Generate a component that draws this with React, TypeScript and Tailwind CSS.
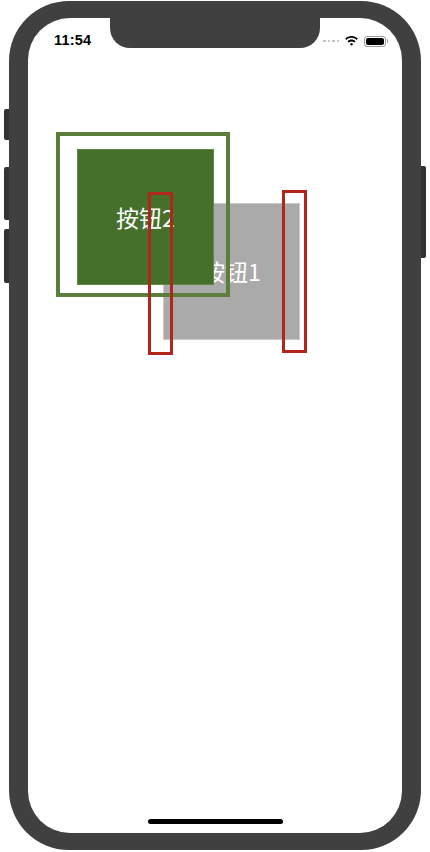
import React from 'react';

function Wifi() {
  return (
    <svg width="13" height="11" viewBox="0 0 13 11" fill="#000">
      <path d="M6.5 0C4 0 1.8 1 0.2 2.6l1.2 1.3C2.7 2.6 4.5 1.8 6.5 1.8s3.8 0.8 5.1 2.1l1.2-1.3C11.2 1 9 0 6.5 0z" />
      <path d="M6.5 3.6c-1.6 0-3 0.6-4 1.6l1.2 1.3c0.7-0.7 1.7-1.1 2.8-1.1s2.1 0.4 2.8 1.1l1.2-1.3c-1-1-2.4-1.6-4-1.6z" />
      <path d="M6.5 7.2c-0.7 0-1.3 0.3-1.7 0.7L6.5 9.8l1.7-1.9C7.8 7.5 7.2 7.2 6.5 7.2z" />
    </svg>
  );
}

function Battery() {
  return (
    <div className="flex items-center">
      <div className="w-[22px] h-[11px] rounded-[3px] border border-[#9a9a9a] p-[1px]">
        <div className="w-full h-full rounded-[2px] bg-black" />
      </div>
      <div className="w-[1.5px] h-[4px] rounded-r-sm bg-[#9a9a9a] ml-[0.5px]" />
    </div>
  );
}

export default function App() {
  return (
    <div className="relative w-[430px] h-[852px] bg-white overflow-hidden">
      {/* side buttons */}
      <div className="absolute left-[4px] top-[109px] w-[6px] h-[31px] rounded-l-[2px] bg-[#333333]" />
      <div className="absolute left-[4px] top-[167px] w-[6px] h-[53px] rounded-l-[2px] bg-[#333333]" />
      <div className="absolute left-[4px] top-[229px] w-[6px] h-[54px] rounded-l-[2px] bg-[#333333]" />
      <div className="absolute left-[420px] top-[166px] w-[6px] h-[92px] rounded-r-[2px] bg-[#333333]" />

      {/* phone frame */}
      <div className="relative ml-[9px] mt-[1px] w-[412px] h-[849px] rounded-[60px] bg-[#404040] pt-[17px] pb-[17px] pl-[19px] pr-[19px]">
        <div className="relative w-full h-full rounded-[42px] bg-white overflow-hidden flex flex-col">
          {/* notch */}
          <div className="absolute left-[82px] top-0 w-[210px] h-[30px] rounded-b-[20px] bg-[#404040]" />

          {/* status bar */}
          <div className="flex items-center justify-between h-[46px] pl-[26px] pr-[14px] font-['Liberation_Sans',sans-serif]">
            <span className="text-[14.5px] font-bold text-black tracking-[0.2px]">11:54</span>
            <div className="flex items-center gap-[6px]">
              <div className="flex items-center gap-[2px] mr-[0px]">
                <span className="w-[2.5px] h-[2.5px] rounded-full bg-[#b5b5b5]" />
                <span className="w-[2.5px] h-[2.5px] rounded-full bg-[#b5b5b5]" />
                <span className="w-[2.5px] h-[2.5px] rounded-full bg-[#b5b5b5]" />
                <span className="w-[2.5px] h-[2.5px] rounded-full bg-[#b5b5b5]" />
              </div>
              <Wifi />
              <Battery />
            </div>
          </div>

          {/* canvas */}
          <div className="relative flex-1 font-['Noto_Sans_CJK_SC','Noto_Sans',sans-serif]">
            {/* 按钮1 */}
            <div className="absolute left-[135px] top-[139px] w-[137px] h-[137px] bg-[#aaaaaa] border border-[#c8c8c8] flex items-center justify-center text-white text-[23px]">
              按钮1
            </div>
            {/* outline + 按钮2 */}
            <div className="absolute left-[28px] top-[68px] w-[174px] h-[165px] border-4 border-[#5b7e3b]" />
            <div className="absolute left-[49px] top-[85px] w-[137px] h-[136px] bg-[#45702c] border border-[#5f8a48] flex items-center justify-center text-white text-[23px]">
              按钮2
            </div>
            {/* red guides */}
            <div className="absolute left-[120px] top-[128px] w-[25px] h-[163px] border-[3px] border-[#b0261b]" />
            <div className="absolute left-[254px] top-[126px] w-[25px] h-[163px] border-[3px] border-[#b0261b]" />
          </div>

          {/* home indicator */}
          <div className="h-[14px] flex justify-center shrink-0">
            <div className="w-[135px] h-[5px] rounded-full bg-black" />
          </div>
        </div>
      </div>
    </div>
  );
}
